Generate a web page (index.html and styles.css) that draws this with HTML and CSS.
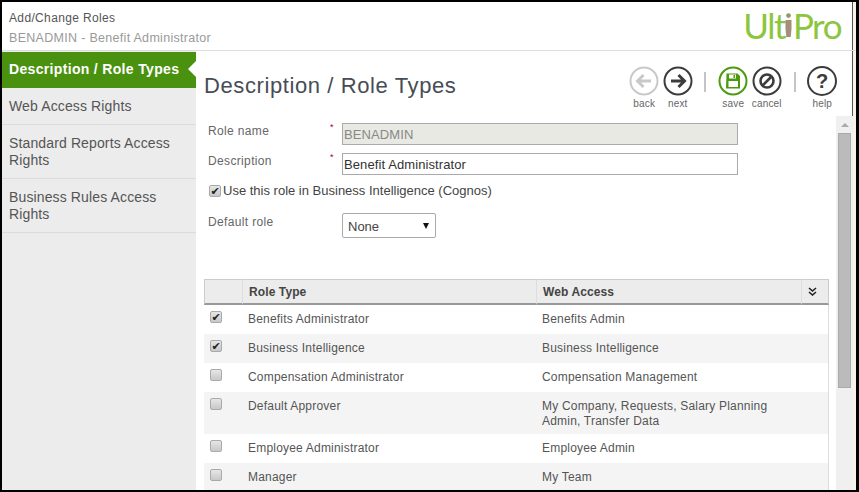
FILE: index.html
```html
<!DOCTYPE html>
<html>

<head>
  <title>Add/Change Roles</title>
  <link rel="stylesheet" href="styles.css">
</head>

<body>
  <div class="window">
    <header class="top">
      <div>
        <div class="top-title">Add/Change Roles</div>
        <div class="top-sub">BENADMIN - Benefit Administrator</div>
      </div>
      <div class="logo">
        <span>Ult</span>
        <svg class="logo-man" viewBox="0 0 7 25" width="7" height="25">
          <circle cx="3.500" cy="2.600" r="2.400" fill="#8f9c68"/>
          <path d="M.5 7h6v9l-.8 8H1.300L.5 16z" fill="#a58f78"/>
        </svg>
        <span>Pro</span>
      </div>
    </header>

    <div class="body">
      <nav class="side">
        <a class="side-item active">Description / Role Types</a>
        <a class="side-item">Web Access Rights</a>
        <a class="side-item">Standard Reports Access Rights</a>
        <a class="side-item">Business Rules Access Rights</a>
      </nav>

      <main class="main">
        <div class="title-bar">
          <h1 class="page-title">Description / Role Types</h1>
          <div class="tools">
            <div class="tool">
              <svg viewBox="0 0 30 30" width="30" height="30">
                <circle cx="15" cy="15" r="13.500" fill="#fff" stroke="#c9c9c9" stroke-width="2"/>
                <path d="M22 15H9M14.500 9l-6 6 6 6" fill="none" stroke="#c9c9c9" stroke-width="3"/>
              </svg>
              <span>back</span>
            </div>
            <div class="tool">
              <svg viewBox="0 0 30 30" width="30" height="30">
                <circle cx="15" cy="15" r="13.500" fill="#fff" stroke="#3c3c3c" stroke-width="2"/>
                <path d="M8 15h13M15.500 9l6 6-6 6" fill="none" stroke="#3c3c3c" stroke-width="3"/>
              </svg>
              <span>next</span>
            </div>
            <div class="tool-sep tool-sep-first"></div>
            <div class="tool">
              <svg viewBox="0 0 30 30" width="30" height="30">
                <circle cx="15" cy="15" r="13.500" fill="#fff" stroke="#4b9a0f" stroke-width="2"/>
                <path d="M8.500 7.500h11l2.500 2.500v12.500h-14z" fill="#4b9a0f"/>
                <rect x="11" y="8.500" width="7" height="4" fill="#fff"/>
                <rect x="15.500" y="9" width="1.500" height="3" fill="#4b9a0f"/>
                <rect x="10.500" y="15" width="9.500" height="6" fill="#fff"/>
              </svg>
              <span>save</span>
            </div>
            <div class="tool">
              <svg viewBox="0 0 30 30" width="30" height="30">
                <circle cx="15" cy="15" r="13.500" fill="#fff" stroke="#3c3c3c" stroke-width="2"/>
                <circle cx="15" cy="15" r="6.500" fill="none" stroke="#3c3c3c" stroke-width="2.600"/>
                <path d="M10.500 19.500l9-9" stroke="#3c3c3c" stroke-width="2.600"/>
              </svg>
              <span>cancel</span>
            </div>
            <div class="tool-sep"></div>
            <div class="tool">
              <div class="help-ring">?</div>
              <span>help</span>
            </div>
          </div>
        </div>

        <div class="scroll-area">
          <div class="pane">
            <div class="form-row">
              <label class="form-label">Role name</label>
              <span class="req">*</span>
              <input class="field field-off" type="text" value="BENADMIN" disabled>
            </div>
            <div class="form-row">
              <label class="form-label">Description</label>
              <span class="req">*</span>
              <input class="field" type="text" value="Benefit Administrator">
            </div>
            <label class="check-row">
              <input class="check" type="checkbox" checked>
              Use this role in Business Intelligence (Cognos)
            </label>
            <div class="form-row role-row">
              <label class="form-label">Default role</label>
              <span></span>
              <div class="select">None <span class="select-arrow"></span></div>
            </div>

            <table class="grid">
              <colgroup>
                <col class="col-check">
                <col class="col-type">
                <col class="col-access">
                <col class="col-more">
              </colgroup>
              <thead>
                <tr>
                  <th></th>
                  <th>Role Type</th>
                  <th>Web Access</th>
                  <th>
                    <svg class="more-icon" viewBox="0 0 9 9" width="9" height="9">
                      <path d="M1 1l3.500 3L8 1M1 5l3.500 3L8 5" fill="none" stroke="#222" stroke-width="1.600"/>
                    </svg>
                  </th>
                </tr>
              </thead>
              <tbody>
                <tr>
                  <td><input class="check" type="checkbox" checked></td>
                  <td>Benefits Administrator</td>
                  <td colspan="2">Benefits Admin</td>
                </tr>
                <tr>
                  <td><input class="check" type="checkbox" checked></td>
                  <td>Business Intelligence</td>
                  <td colspan="2">Business Intelligence</td>
                </tr>
                <tr>
                  <td><input class="check" type="checkbox"></td>
                  <td>Compensation Administrator</td>
                  <td colspan="2">Compensation Management</td>
                </tr>
                <tr>
                  <td><input class="check" type="checkbox"></td>
                  <td>Default Approver</td>
                  <td colspan="2">My Company, Requests, Salary Planning<br>Admin, Transfer Data</td>
                </tr>
                <tr>
                  <td><input class="check" type="checkbox"></td>
                  <td>Employee Administrator</td>
                  <td colspan="2">Employee Admin</td>
                </tr>
                <tr>
                  <td><input class="check" type="checkbox"></td>
                  <td>Manager</td>
                  <td colspan="2">My Team</td>
                </tr>
              </tbody>
            </table>
          </div>

          <div class="scrollbar">
            <div class="scroll-up"></div>
            <div class="scroll-thumb"></div>
          </div>
        </div>
      </main>
    </div>
  </div>
</body>

</html>
```

FILE: styles.css
```css
html,
body {
  margin: 0;
  height: 100%;
  overflow: hidden;
}

body {
  font-family: "Liberation Sans", Arial, sans-serif;
  background-color: black;
}

.window {
  box-sizing: border-box;
  height: 492px;
  border: solid black;
  border-width: 2px 3px 2px 2px;
  display: flex;
  flex-direction: column;
  background-color: white;
  box-shadow: inset -3px 0 0 #f7f3ea, inset -4px 0 0 #555;
  overflow: hidden;
}

/* header */
.top {
  height: 49px;
  flex: none;
  box-sizing: border-box;
  padding: 8px 15px 0 7px;
  display: flex;
  justify-content: space-between;
  border-bottom: 1px solid #ddd;
}

.top-title {
  font-size: 12px;
  line-height: 16px;
  letter-spacing: 0.350px;
  color: #555;
}

.top-sub {
  margin-top: 2px;
  font-size: 12.500px;
  line-height: 20px;
  letter-spacing: 0.300px;
  color: #999;
}

.logo {
  display: flex;
  align-items: center;
  height: 30px;
  font-family: "Lato", sans-serif;
  font-weight: 400;
  font-size: 35px;
  letter-spacing: -1.500px;
  color: #8cc63f;
}

.logo-man {
  margin: 0 1px 0 0;
}

/* sidebar + main */
.body {
  flex: 1;
  display: flex;
  min-height: 0;
}

.side {
  width: 194px;
  flex: none;
  background-color: #ececec;
  padding-top: 1px;
}

.side-item {
  display: block;
  padding: 10px 20px 9px 7px;
  font-size: 14px;
  line-height: 17px;
  letter-spacing: 0.130px;
  color: #555;
  border-bottom: 1px solid #dcdcdc;
}

.side-item.active {
  position: relative;
  padding-top: 9px;
  padding-bottom: 10px;
  padding-right: 0;
  white-space: nowrap;
  background-color: #4b9110;
  color: white;
  font-weight: bold;
  letter-spacing: 0.330px;
  border-bottom: none;
}

.side-item.active::after {
  content: "";
  position: absolute;
  right: 0;
  top: 9px;
  border: 8px solid transparent;
  border-right-color: white;
  border-left-width: 0;
}

.main {
  flex: 1;
  min-width: 0;
  display: flex;
  flex-direction: column;
}

.title-bar {
  height: 65px;
  flex: none;
  display: flex;
  justify-content: space-between;
  box-sizing: border-box;
  padding: 15px 17px 0 8px;
}

.page-title {
  margin: 7px 0 0;
  font-size: 22px;
  line-height: 26px;
  font-weight: normal;
  letter-spacing: 0.600px;
  color: #464d56;
}

.tools {
  display: flex;
  align-items: flex-start;
}

.tool {
  width: 33.500px;
  display: flex;
  flex-direction: column;
  align-items: center;
  font-size: 10px;
  line-height: 12px;
  letter-spacing: 0.200px;
  color: #666;
}

.tool span {
  margin-top: 2px;
}

.tool-sep {
  width: 2px;
  height: 20px;
  margin: 6px 10px 0;
  background-color: #c4c4c4;
}

.tool-sep-first {
  margin: 6px 11px 0 9px;
}

.help-ring {
  box-sizing: border-box;
  width: 30px;
  height: 30px;
  border: 2px solid #3c3c3c;
  border-radius: 50%;
  text-align: center;
  font-size: 20px;
  line-height: 26px;
  font-weight: bold;
  color: #3c3c3c;
}

.scroll-area {
  flex: 1;
  min-height: 0;
  display: flex;
  overflow: hidden;
}

.pane {
  width: 640px;
  flex: none;
  box-sizing: border-box;
  padding: 7px 7px 0 8px;
}

.form-row {
  display: grid;
  grid-template-columns: 122px 12px 396px;
  margin: 0 0 8px 4px;
}

.form-label {
  font-size: 12px;
  line-height: 16px;
  letter-spacing: 0.350px;
  color: #666;
}

.req {
  color: #a00020;
  font-size: 9px;
  line-height: 9px;
}

.field {
  box-sizing: border-box;
  width: 396px;
  height: 22px;
  margin: 0;
  padding: 1px;
  border: 1px solid #aaa;
  font-family: "Liberation Sans", Arial, sans-serif;
  font-size: 13px;
  letter-spacing: 0.100px;
  color: #333;
  background-color: white;
}

.field-off {
  background-color: #e9e9e3;
  color: #888;
}

.check-row {
  display: flex;
  align-items: center;
  gap: 2px;
  height: 15px;
  margin: 0 0 15px 5px;
  font-size: 13px;
  color: #444;
}

.check {
  appearance: none;
  display: block;
  box-sizing: border-box;
  width: 12px;
  height: 12px;
  margin: 0;
  border: 1px solid #aaa;
  border-radius: 2px;
  background: linear-gradient(#e6e6e6, #c8c8c8);
  font-size: 11px;
  line-height: 10px;
  text-align: center;
  color: #222;
}

.check:checked::before {
  content: "\2714";
  font-family: "DejaVu Sans", sans-serif;
}

.role-row {
  margin-bottom: 41px;
}

.role-row .form-label {
  margin-top: 1px;
}

.select {
  position: relative;
  box-sizing: border-box;
  width: 94px;
  height: 25px;
  padding: 4px 5px;
  border: 1px solid #aaa;
  border-radius: 2px;
  font-size: 13px;
  line-height: 17px;
  color: #444;
}

.select-arrow {
  position: absolute;
  right: 6px;
  top: 9px;
  border: 3.500px solid transparent;
  border-top: 6px solid #111;
  border-bottom: 0;
}

/* role table */
.grid {
  width: 625px;
  table-layout: fixed;
  border-collapse: separate;
  border-spacing: 0;
  font-size: 12px;
  letter-spacing: 0.200px;
  color: #555;
}

.col-check {
  width: 38px;
}

.col-type {
  width: 294px;
}

.col-access {
  width: 265px;
}

.col-more {
  width: 28px;
}

.grid th {
  height: 23px;
  padding: 0 6px;
  box-sizing: content-box;
  text-align: left;
  font-weight: bold;
  letter-spacing: 0.100px;
  color: #444;
  background-color: #ececec;
  border-top: 1px solid #ccc;
  border-left: 1px solid #ddd;
  border-bottom: 2px solid #999;
}

.grid th:first-child {
  border-left: 1px solid #ccc;
}

.grid th:last-child {
  border-right: 1px solid #ccc;
}

.more-icon {
  display: block;
}

.grid td {
  height: 15px;
  padding: 7px 6px 5px;
  line-height: 15px;
  vertical-align: top;
}

.grid tr td:last-child {
  border-right: 1px solid #ddd;
}

.grid tbody tr {
  height: 29px;
}

.grid td:first-child {
  padding: 6px 0 0 6px;
}

.grid tbody tr:nth-child(even) {
  background-color: #f4f4f4;
}

/* fake scrollbar */
.scrollbar {
  width: 17px;
  flex: none;
  background-color: #f0f0f0;
  display: flex;
  flex-direction: column;
  align-items: center;
}

.scroll-up {
  margin: 7px 0 6px;
  border: 4px solid transparent;
  border-bottom: 4px solid #aaa;
  border-top: 0;
}

.scroll-thumb {
  box-sizing: border-box;
  width: 13px;
  height: 255px;
  background-color: #bbb;
  border: 1px solid #aaa;
}
```
